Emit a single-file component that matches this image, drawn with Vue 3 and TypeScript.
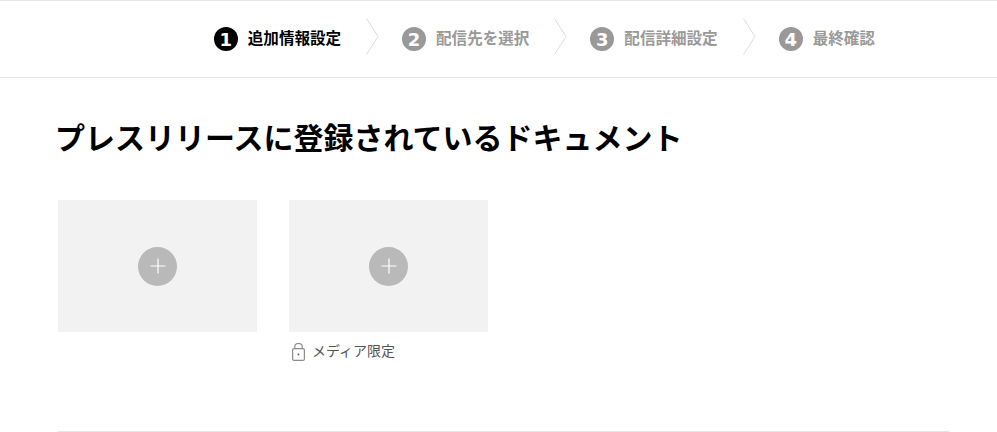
<script setup lang="ts">
const steps = [
  { n: 1, label: '追加情報設定', active: true },
  { n: 2, label: '配信先を選択', active: false },
  { n: 3, label: '配信詳細設定', active: false },
  { n: 4, label: '最終確認', active: false },
]
const cards = [{ id: 1, locked: false }, { id: 2, locked: true }]
</script>

<template>
  <div class="page">
    <nav class="stepbar">
      <template v-for="(s, i) in steps" :key="s.n">
        <div class="step" :class="{ active: s.active }">
          <span class="num">{{ s.n }}</span>
          <span class="label">{{ s.label }}</span>
        </div>
        <svg v-if="i < steps.length - 1" class="chev" width="13" height="37" viewBox="0 0 13 37">
          <path d="M0.5 0.5 L12 18.5 L0.5 36.5" fill="none" stroke="#dcdcdc" stroke-width="1" />
        </svg>
      </template>
    </nav>
    <main class="content">
      <h1 class="title">プレスリリースに登録されているドキュメント</h1>
      <div class="cards">
        <div v-for="c in cards" :key="c.id" class="card">
          <div class="thumb">
            <span class="plus">
              <svg width="16" height="16" viewBox="0 0 16 16">
                <path d="M8 0.5 V15.5 M0.5 8 H15.5" stroke="#fff" stroke-width="1.2" fill="none" />
              </svg>
            </span>
          </div>
          <div v-if="c.locked" class="note">
            <svg class="lock" width="13" height="18" viewBox="0 0 13 18">
              <rect x="0.6" y="5.6" width="11.8" height="11.8" rx="1.5" fill="none" stroke="#8c8c8c" stroke-width="1.2" />
              <path d="M2.8 5.5 V3.6 a3.7 3.1 0 0 1 7.4 0 V5.5" fill="none" stroke="#8c8c8c" stroke-width="1.2" />
              <circle cx="6.5" cy="11.5" r="1" fill="#666" />
            </svg>
            <span class="note-text">メディア限定</span>
          </div>
        </div>
      </div>
    </main>
    <div class="rule"></div>
  </div>
</template>

<style scoped>
.page {
  width: 997px;
  height: 432px;
  box-sizing: border-box;
  overflow: hidden;
  background: #fff;
  font-family: "Noto Sans CJK JP", "Liberation Sans", sans-serif;
}
.stepbar {
  height: 78px;
  box-sizing: border-box;
  border-top: 1px solid #e5e5e5;
  border-bottom: 1px solid #e5e5e5;
  padding-left: 213.8px;
  display: flex;
  align-items: center;
}
.step {
  display: flex;
  align-items: center;
  gap: 10px;
  color: #999;
}
.step.active { color: #000; }
.num {
  width: 24px;
  height: 24px;
  border-radius: 50%;
  background: #999;
  color: #fff;
  display: flex;
  align-items: center;
  justify-content: center;
  font: bold 18px "DejaVu Sans", sans-serif;
}
.active .num { background: #000; }
.label {
  font-size: 15.55px;
  font-weight: 700;
  line-height: 24px;
  padding-bottom: 4px;
  white-space: nowrap;
}
.chev { margin: -6px 23px 0 25px; flex: none; }
.content { padding: 0 48px 0 58px; }
.title {
  margin: 38px 0 0 -3px;
  font-size: 30px;
  line-height: 40px;
  font-weight: 700;
  color: #000;
  white-space: nowrap;
}
.cards {
  display: flex;
  gap: 32px;
  margin-top: 44px;
}
.card { width: 199px; }
.thumb {
  height: 132px;
  background: #f2f2f2;
  display: flex;
  align-items: center;
  justify-content: center;
}
.plus {
  width: 39px;
  height: 39px;
  border-radius: 50%;
  background: #b9b9b9;
  display: flex;
  align-items: center;
  justify-content: center;
}
.note {
  margin-top: 9px;
  display: flex;
  align-items: center;
  gap: 7px;
  padding-left: 3px;
  font-size: 14px;
  line-height: 18px;
  color: #555;
}
.lock { flex: none; margin-top: -3px; }
.note-text { padding-bottom: 6px; }
.rule {
  height: 1px;
  margin: 66px 48px 0 58px;
  background: #e5e5e5;
}
</style>
